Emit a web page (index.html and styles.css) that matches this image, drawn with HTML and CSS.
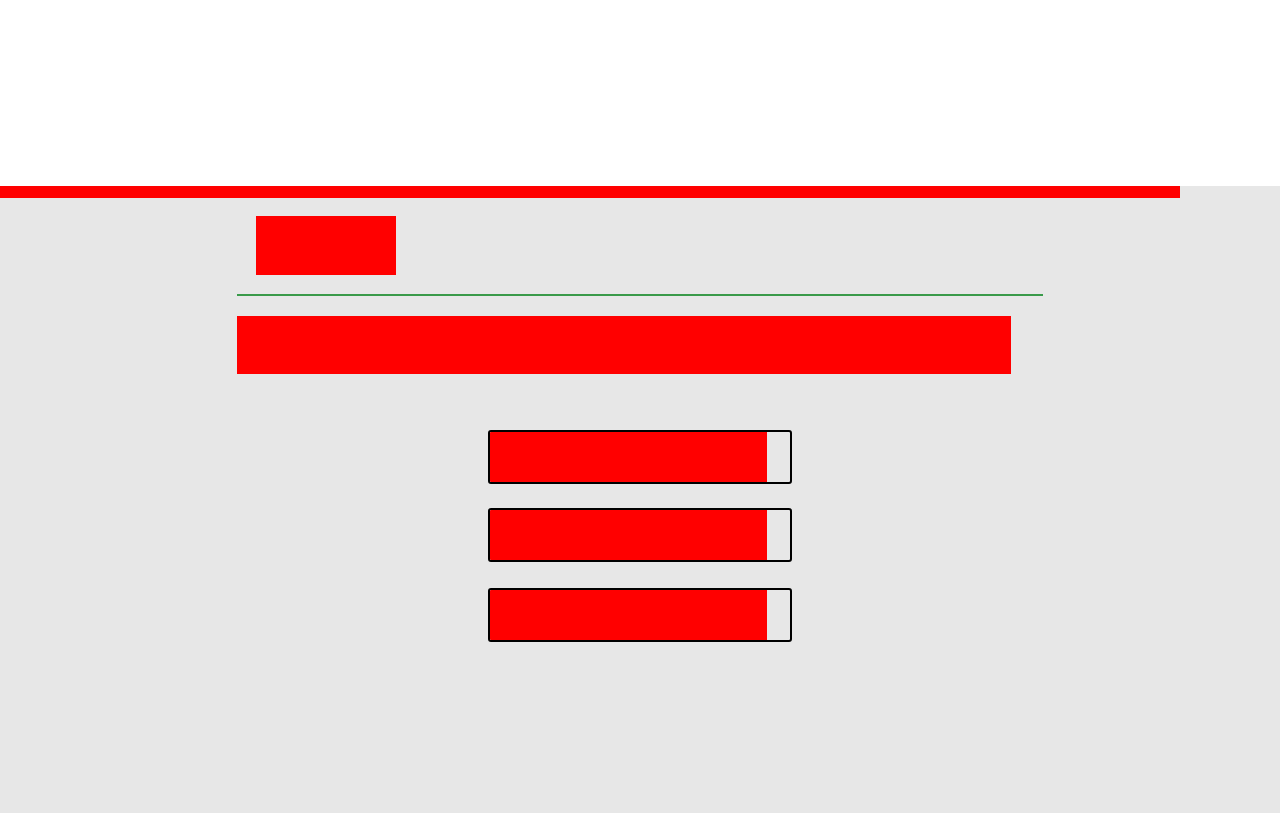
FILE: index.html
```html
<!DOCTYPE html>
<html lang="en">
<head>
    <meta charset="UTF-8">
    <meta name="viewport" content="width=device-width, initial-scale=1.0">
    <title>Page</title>
    <link rel="stylesheet" href="styles.css">
</head>
<body>
    <header class="top"></header>
    <div class="accent-bar"></div>

    <main class="container">
        <div class="logo-box"></div>
        <hr class="divider">
        <div class="banner"></div>

        <div class="bars">
            <div class="bar"><div class="bar-fill" style="width: 92.3%"></div></div>
            <div class="bar bar-mid"><div class="bar-fill" style="width: 92.3%"></div></div>
            <div class="bar bar-last"><div class="bar-fill" style="width: 92.3%"></div></div>
        </div>
    </main>
</body>
</html>
```

FILE: styles.css
```css
html, body {
    margin: 0;
    padding: 0;
}

body {
    background-color: #e7e7e7;
    font-family: "Liberation Sans", Arial, sans-serif;
    min-height: 813px;
}

.top {
    height: 186px;
    background-color: #fff;
}

.accent-bar {
    width: 1180px;
    height: 12px;
    background-color: #f00;
}

.container {
    width: 806px;
    margin: 0 auto;
    padding-top: 18px;
}

.logo-box {
    width: 140px;
    height: 59px;
    margin-left: 19px;
    background-color: #f00;
}

.divider {
    margin: 19px 0 0 0;
    border: none;
    height: 2px;
    background-color: #3a9a4a;
}

.banner {
    width: 774px;
    height: 58px;
    margin-top: 20px;
    background-color: #f00;
}

.bars {
    display: flex;
    flex-direction: column;
    align-items: center;
    padding-top: 56px;
}

.bar {
    width: 300px;
    height: 50px;
    border: 2px solid #000;
    border-radius: 3px;
    background-color: #e7e7e7;
    overflow: hidden;
}

.bar-mid {
    margin-top: 24px;
}

.bar-last {
    margin-top: 26px;
}

.bar-fill {
    height: 100%;
    background-color: #f00;
}
```
